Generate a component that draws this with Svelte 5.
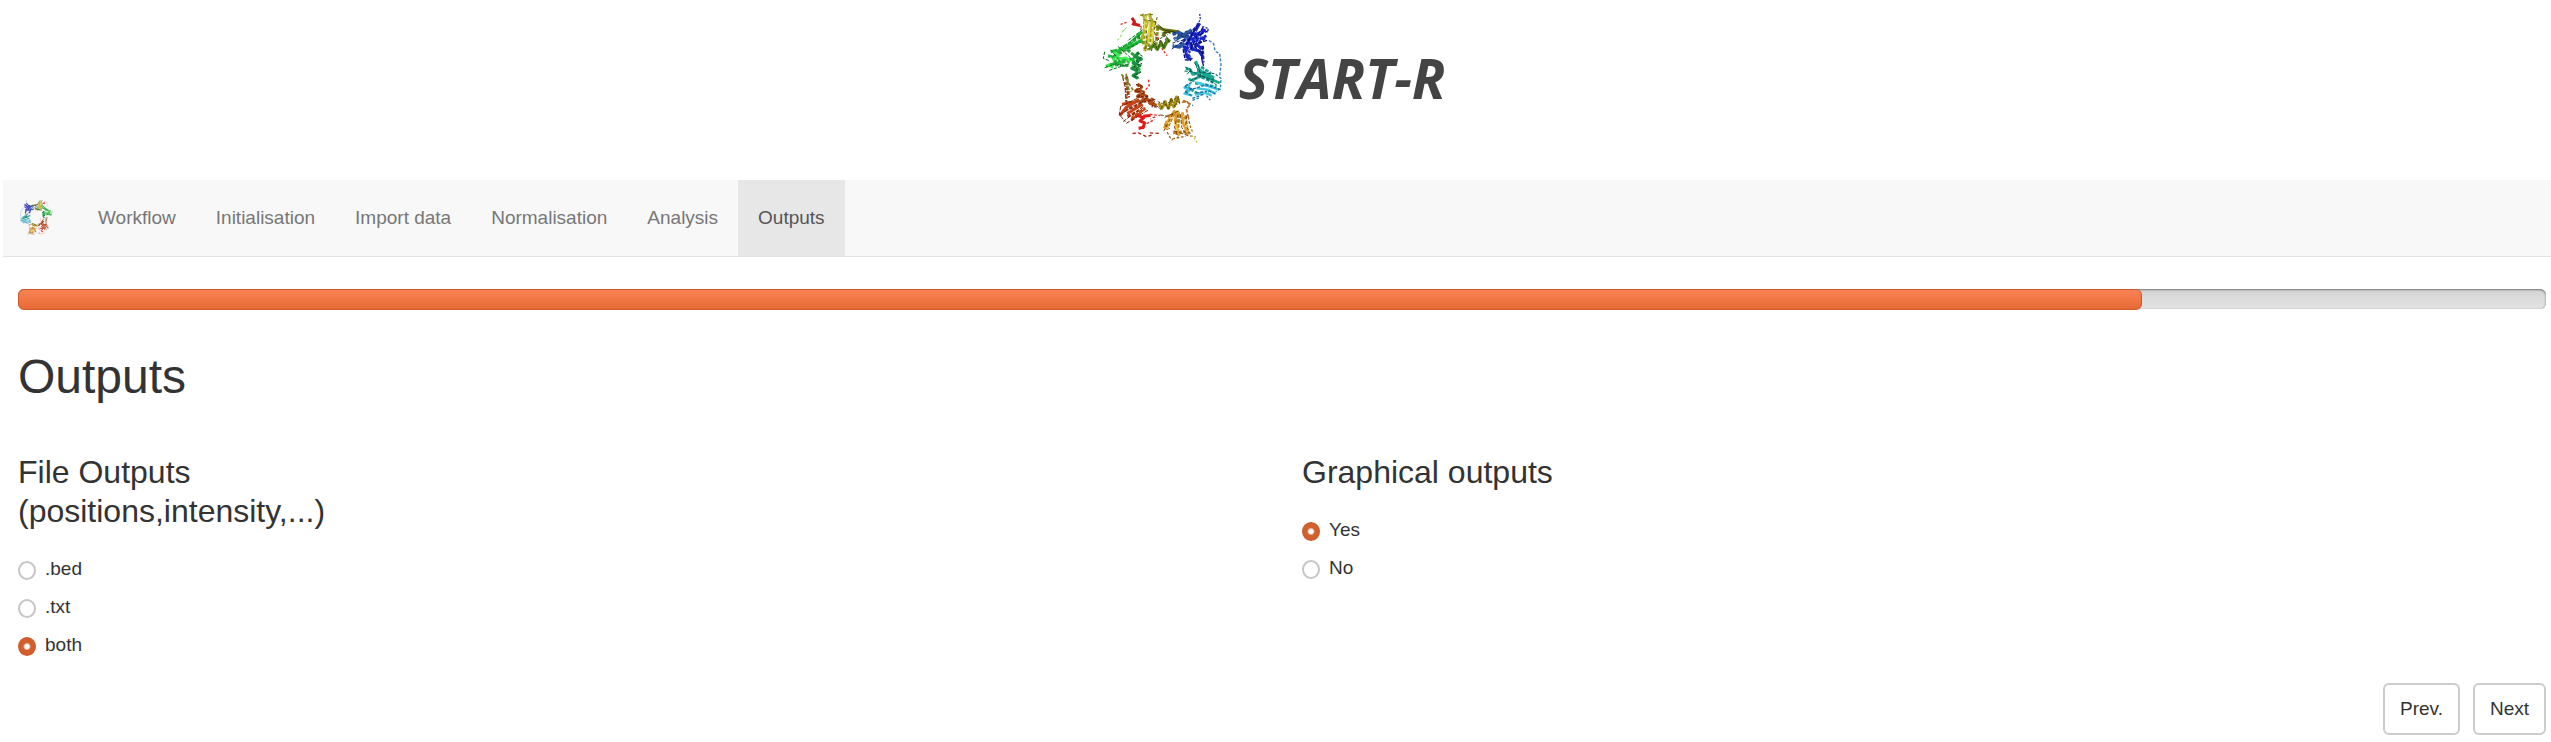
<script>
  const tabs = ['Workflow', 'Initialisation', 'Import data', 'Normalisation', 'Analysis', 'Outputs'];
  const formats = ['.bed', '.txt', 'both'];
  const answers = ['Yes', 'No'];
  let active = $state('Outputs');
  let format = $state('both');
  let graphical = $state('Yes');
  const progress = 84;
</script>

{#snippet ring()}
  <g fill="none" stroke-linejoin="round">
    <!-- broad broken bands under each domain -->
    <g stroke-width="9" stroke-dasharray="11 4">
      <path stroke="#8c9420" d="M166 50l-6 90M186 58l-10 96M204 84l-6 60M222 96l22 4"/>
      <path stroke="#30a040" d="M150 112l-50 36-34 30M134 136l-50 30M70 186l64-6M60 196l60 4M112 152l30 24"/>
      <path stroke="#1c2cb0" d="M318 86l-46 50M344 90l-50 66M346 116l-50 44M262 116l34-10M264 140l30 6M338 140l2 50M294 166l12 16"/>
      <path stroke="#209c98" d="M322 196l10 40M334 204l30 20M308 222l64 28M316 252l64 12M290 262l30 20M326 284l40-6"/>
      <path stroke="#a84018" d="M150 272l28 36M112 312l40-4M104 334l56-22M112 352l56-24M110 232l6 64M124 364l26-22"/>
      <path stroke="#b88020" d="M212 322l50-8M252 344l-22 48M268 346l-6 62M286 350l8 56M234 352l36-8M250 402l44-4"/>
    </g>
    <!-- red coils -->
    <path stroke="#d01818" stroke-width="9" d="M126 56l8 12-6 10M130 74l20 5"/>
    <path stroke="#e03030" stroke-width="4" stroke-dasharray="7 5" d="M92 76l22-8M148 82l26-2M196 104l14 20 8 28 14 18"/>
    <!-- yellow bundle -->
    <path stroke="#b8b020" stroke-width="9" d="M158 44l14 26-18 54M178 42l8 30-22 84M196 66l-10 36 4 40"/>
    <path stroke="#e0d840" stroke-width="5" d="M168 48l-6 44M180 60l-4 70M192 72l-6 60"/>
    <path stroke="#5a5a10" stroke-width="3" stroke-dasharray="9 6" d="M150 48l44-2M160 62l44 6M202 54l-10 40 10 30M154 84l-6 36M170 94l-2 62M184 150l-26-4"/>
    <path stroke="#6c7410" stroke-width="9" d="M198 82l24 10 46 6M232 92l-14 20"/>
    <path stroke="#303810" stroke-width="3" d="M204 76l22 18 44 8M216 102l24-2"/>
    <!-- olive helix -->
    <path stroke="#58841c" stroke-width="10" d="M180 148l12-10 10 12 12-18 8 14 12-24 6 6"/>
    <path stroke="#244c10" stroke-width="3" stroke-dasharray="8 4" d="M184 156l10-24 10 22 8-32 10 24 8-34 10 20M190 130l44-24"/>
    <!-- green sheets -->
    <path stroke="#20b838" stroke-width="9" d="M156 98l-32 32-38 22M156 122l-40 24-54 12M54 170l36 10 30 8M48 202l28-10 30-4M126 176l10 24 14 14"/>
    <path stroke="#40f050" stroke-width="7" d="M70 160l18 8-18 14 38-6 14 12M52 196l18 10M126 198l14 12"/>
    <path stroke="#087020" stroke-width="3" stroke-dasharray="10 4" d="M158 92l-46 34M150 108l-52 36M158 128l-48 20M44 158l-4 20 20 8M44 206l34-12 28 8M58 214l60-20M62 152l28 34M84 142l38 34"/>
    <path stroke="#189040" stroke-width="10" d="M148 160l-14 12 20 8-24 12 20 8-24 8 22 10-18 12 14 8"/>
    <path stroke="#0c4c20" stroke-width="3" stroke-dasharray="8 5" d="M140 160l18 12-22 14 20 8-24 8 20 18-20 10 16 8"/>
    <path stroke="#88d860" stroke-width="3" stroke-dasharray="8 6" d="M110 84l-14 16-6 18-12 8M104 92l-8 4"/>
    <!-- blue domain -->
    <path stroke="#28589c" stroke-width="10" d="M248 106l20-6 14 8 24-16M254 124l22-14 22 6M248 140l22 4 14-12"/>
    <path stroke="#102868" stroke-width="3" stroke-dasharray="9 4" d="M250 98l34 16 24-20M250 118l44-24M248 132l34-10M246 150l28-20 22-10"/>
    <path stroke="#1824c8" stroke-width="9" d="M330 72l-16 28-26 38M348 92l-28 14-30 44M350 110l-36 18M284 140l8 34 12 8M302 148l26 8 12 18M318 132l18 18"/>
    <path stroke="#080c78" stroke-width="4" stroke-dasharray="12 4" d="M324 74l-34 62M340 84l-40 70M356 94l-42 22M352 124l-48 14M340 142l-4 36 6 26M280 150l6 32 18 2M300 132l36 28"/>
    <path stroke="#5068f0" stroke-width="3" stroke-dasharray="8 5" d="M310 110l-16 34M334 98l-18 28M290 160l14 18"/>
    <path stroke="#283898" stroke-width="4" stroke-dasharray="6 4" d="M330 44l2 18-10 14M338 82l18 6-4 12"/>
    <path stroke="#3078b8" stroke-width="4" stroke-dasharray="9 5" d="M358 124l14 10 4 22 14 8 4 32-4 34"/>
    <!-- teal domain -->
    <path stroke="#18a890" stroke-width="8" d="M318 186l10 26 42 22M288 208l14 4 6 14 22-6 44 16M308 242l32-12 50 22M296 240l18 6"/>
    <path stroke="#0c5850" stroke-width="3" stroke-dasharray="10 4" d="M314 190l16 30 44 4M286 204l18 8-12 14M284 216l24 2 24 12 42 14M300 246l36-16 48 30M326 198l8 36"/>
    <path stroke="#40c8e0" stroke-width="7" d="M302 256l-18 10 18 8-18 10 24 6M320 250l30 10 38 12M320 268l34 4 24 12M316 288l26-8 24 10"/>
    <path stroke="#1870a8" stroke-width="4" stroke-dasharray="9 4" d="M306 250l-22 12 24 8-24 8 22 12M310 270l40-12 44 14M318 282l40-6 22 10M308 298l34-12"/>
    <path stroke="#1888a0" stroke-width="4" stroke-dasharray="8 5" d="M378 226l16 12-2 32-14 8M350 290l12 14M308 304l22-8M296 312l14 8"/>
    <!-- rust domain -->
    <path stroke="#70882c" stroke-width="5" stroke-dasharray="10 5" d="M94 226l14 14 8 30 8 8M108 224l8 28 14 22"/>
    <path stroke="#8c4018" stroke-width="4" stroke-dasharray="14 4" d="M98 232l8 34 2 44M106 250l6 32-2 28"/>
    <path stroke="#b04c18" stroke-width="11" d="M142 256l12 8-16 12 22 4-16 12 26 0-14 14 28-2 2 14M190 298l-10 14 20 8"/>
    <path stroke="#602008" stroke-width="3" stroke-dasharray="9 4" d="M138 256l20 6-22 14 28 4-24 14 34-2-18 18 40-8-10 22 20 0"/>
    <path stroke="#c44418" stroke-width="9" d="M148 302l-40 24-18 24M158 316l-46 28M166 328l-40 30M140 308l-44 8"/>
    <path stroke="#782008" stroke-width="3" stroke-dasharray="12 4" d="M142 298l-48 24M154 310l-66 38M160 322l-60 46M174 334l-66 40M92 352l14 16M92 322l-4 28"/>
    <path stroke="#e01818" stroke-width="9" d="M144 350l18 6-12 10 14 6-4 14-14 2M160 352l22-2"/>
    <path stroke="#e02c2c" stroke-width="4" stroke-dasharray="8 5" d="M176 242l2 18-14 16M180 346l30 4M196 354l-14 6M170 374l24-12"/>
    <path stroke="#a82010" stroke-width="4" stroke-dasharray="10 7" d="M128 404l18-2 24 12 18-6M180 402l32 2"/>
    <!-- ochre helix and orange sheets -->
    <path stroke="#a89418" stroke-width="9" d="M206 312l10 16 10-20 10 20 8-26 8 22 8-30 8 18"/>
    <path stroke="#504808" stroke-width="3" stroke-dasharray="8 3" d="M200 320l14 12 8-26 14 26 8-34 12 26 10-32 4 26M204 308l22 10 36-22"/>
    <path stroke="#c06820" stroke-width="5" stroke-dasharray="11 4" d="M276 310l16-2 8 10-10 12 6 28M280 304l22 12"/>
    <path stroke="#e0a028" stroke-width="9" d="M256 334l-18 28-10 30M264 336l-8 28 12 46M278 340l2 32 16 34M232 366l-8 22"/>
    <path stroke="#ffc850" stroke-width="5" d="M248 350l-16 28M256 370l6 34M284 370l12 24"/>
    <path stroke="#784008" stroke-width="3" stroke-dasharray="12 5" d="M266 336l-42 20M250 344l-28 52M264 348l-10 36 12 34M272 346l4 40 18 26M290 350l-2 30 14 24M210 348l26 4M224 376l16 14M252 396l50 16"/>
    <path stroke="#a46418" stroke-width="4" stroke-dasharray="8 5" d="M296 354l4 24 8 20M232 400l10 18 6 6M248 420l40-8M294 400l10 12 14 2"/>
    <path stroke="#d0bc40" stroke-width="4" stroke-dasharray="6 5" d="M304 410l14 12 4 12"/>
  </g>
  <!-- light gaps between the strands -->
  <g fill="none" stroke="#fff" stroke-width="3" stroke-dasharray="4 12">
    <path d="M172 56l-10 70M188 84l-6 54M142 118l-62 34M60 176l56 12M136 184l14 40M262 104l-8 36M318 96l-26 58M342 110l-34 28M296 152l34 22"/>
    <path d="M322 204l50 26M310 234l72 26M292 262l16 24M326 276l44 6M106 242l6 56M148 264l24 46M146 312l-46 36M160 330l-46 34M216 316l46-4M244 356l-14 38M262 356l4 48M282 350l10 50"/>
  </g>
{/snippet}

<div class="page">
  <header class="brand">
    <svg class="ring" viewBox="36 36 364 402" aria-hidden="true">{@render ring()}</svg>
    <span class="name">START-R</span>
  </header>

  <nav class="navbar" aria-label="Steps">
    <a class="home" href="#home" aria-label="START-R">
      <svg viewBox="36 36 364 402" shape-rendering="crispEdges" aria-hidden="true">
        <g transform="matrix(-1 0 0 1 436 0)">{@render ring()}</g>
      </svg>
    </a>
    {#each tabs as tab}
      <a
        class="tab"
        class:active={tab === active}
        href={'#' + tab}
        aria-current={tab === active ? 'page' : undefined}
        onclick={() => (active = tab)}>{tab}</a>
    {/each}
  </nav>

  <main>
    <div class="progress" role="progressbar" aria-label="Progress" aria-valuenow={progress} aria-valuemin="0" aria-valuemax="100">
      <div class="bar" style:width="{progress}%"></div>
    </div>

    <h1>Outputs</h1>

    <div class="columns">
      <fieldset>
        <legend>File Outputs<br />(positions,intensity,...)</legend>
        {#each formats as item}
          <label><input type="radio" name="format" value={item} bind:group={format} />{item}</label>
        {/each}
      </fieldset>
      <fieldset>
        <legend>Graphical outputs</legend>
        {#each answers as item}
          <label><input type="radio" name="graphical" value={item} bind:group={graphical} />{item}</label>
        {/each}
      </fieldset>
    </div>

    <div class="pager">
      <button type="button">Prev.</button>
      <button type="button">Next</button>
    </div>
  </main>
</div>

<style>
  :global(body) {
    margin: 0;
    background: #fff;
  }
  .page {
    font: 19px/32px 'Liberation Sans', Arial, sans-serif;
    color: #333;
  }
  .brand {
    display: flex;
    align-items: center;
    justify-content: center;
    gap: 16px;
    height: 156px;
    margin-bottom: 24px;
    padding-right: 4px;
  }
  .ring {
    width: 121px;
    height: 134px;
  }
  .name {
    font: italic 700 55px/80px 'Open Sans', sans-serif;
    color: #444;
  }
  .navbar {
    display: flex;
    margin-left: 3px;
    height: 76px;
    background: #f8f8f8;
    border-bottom: 1px solid #e2e2e2;
  }
  .home {
    display: flex;
    align-items: center;
    margin-right: 25px;
    padding: 0 0 0 17px;
  }
  .home svg {
    width: 33px;
    height: 38px;
  }
  .tab {
    display: flex;
    align-items: center;
    padding: 0 20px;
    color: #777;
    text-decoration: none;
  }
  .tab.active {
    background: #e7e7e7;
    color: #555;
  }
  main {
    padding: 32px 5px 0 18px;
  }
  .progress {
    height: 20px;
    border-radius: 6px;
    background: linear-gradient(#d3d3d3, #e3e3e3);
    box-shadow: inset 0 1px 2px #777, inset 0 0 1px #999;
  }
  .bar {
    box-sizing: border-box;
    height: 21px;
    border: 1px solid #d2592b;
    border-radius: 6px;
    background: linear-gradient(#f98254, #e66a34);
  }
  h1 {
    margin: 36px 0 44px;
    font-size: 48px;
    line-height: 64px;
    font-weight: 400;
  }
  .columns {
    display: grid;
    grid-template-columns: 1fr 1fr;
    gap: 40px;
  }
  fieldset {
    min-width: 0;
    margin: 0;
    padding: 0;
    border: 0;
  }
  legend {
    margin-bottom: 22px;
    padding: 0;
    font-size: 32px;
    line-height: 39px;
  }
  label {
    display: flex;
    align-items: center;
    gap: 9px;
    width: max-content;
    margin-bottom: 6px;
  }
  input {
    appearance: none;
    box-sizing: border-box;
    width: 18px;
    height: 19px;
    margin: 2px 0 0;
    border: 2px solid #c6c6c6;
    border-radius: 50%;
    background: #fff;
  }
  input:checked {
    border-color: #cf5c2d;
    background: radial-gradient(circle, #fff 2px, #d2602f 4px);
  }
  .pager {
    display: flex;
    justify-content: flex-end;
    gap: 13px;
    margin-top: 16px;
  }
  button {
    height: 52px;
    padding: 0 15px;
    border: 2px solid #ccc;
    border-radius: 6px;
    background: #fff;
    color: #333;
    font: inherit;
  }
</style>
